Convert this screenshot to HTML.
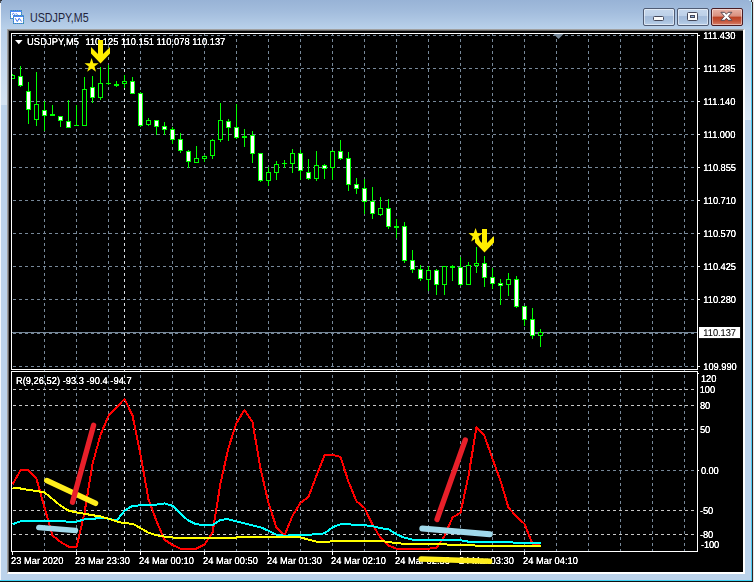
<!DOCTYPE html>
<html lang="en">
<head>
<meta charset="utf-8">
<title>USDJPY,M5</title>
<style>
html,body{margin:0;padding:0;}
body{width:754px;height:582px;overflow:hidden;position:relative;background:#bcd3eb;font-family:"Liberation Sans",sans-serif;}
#win{position:absolute;left:0;top:0;width:754px;height:582px;overflow:hidden;background:linear-gradient(to bottom,#98b3d6 0px,#a3bddd 12px,#b9d1ea 29px,#bcd3eb 40px);}
#bandL{position:absolute;left:1px;top:29px;width:6px;height:76px;background:linear-gradient(to bottom,#b8cfe8 0,#d4e3f2 100%);}
#bandR{position:absolute;left:745px;top:29px;width:6px;height:91px;background:linear-gradient(to bottom,#b8cfe8 0,#dae7f4 100%);}
#edgeL{position:absolute;left:0;top:0;width:1px;height:582px;background:#f4f8fc;}
#edgeR1{position:absolute;left:751px;top:0;width:1px;height:582px;background:linear-gradient(to bottom,#b4e6f8 0,#8cdcf6 20px,#4ccaf2 60px);}
#edgeR2{position:absolute;left:752px;top:0;width:1px;height:582px;background:#2c2424;}
#edgeR3{position:absolute;left:753px;top:0;width:1px;height:582px;background:#e8e8e8;}
#edgeB1{position:absolute;left:0;top:580px;width:752px;height:1px;background:#3fd2f4;}
#edgeB2{position:absolute;left:0;top:581px;width:753px;height:1px;background:#101010;}
#client{position:absolute;left:7px;top:29px;width:738px;height:545px;background:#000;box-sizing:border-box;border-left:1px solid #a0a0a0;border-top:1px solid #a0a0a0;border-right:2px solid #fff;border-bottom:2px solid #fff;}
#client:before{content:"";position:absolute;left:0;top:0;right:0;bottom:0;border-left:1px solid #666;border-top:1px solid #666;}
#title{position:absolute;left:29.5px;top:8.5px;height:18px;line-height:18px;font-size:12px;color:#14122e;opacity:.92;white-space:nowrap;transform-origin:0 50%;transform:scaleX(.892);}
.px{position:absolute;}
.btn{position:absolute;top:8px;height:18px;box-sizing:border-box;border:1px solid #505c74;border-radius:2px;box-shadow:inset 0 0 0 1px rgba(255,255,255,.5);background:linear-gradient(to bottom,#c6d7ec 0%,#bcd0e8 44%,#a3bbda 47%,#a9c1de 75%,#bbd1ea 100%);}
#bclose{border-color:#4a1c22;background:linear-gradient(to bottom,#e8b2a6 0%,#d98f7e 45%,#bb4023 50%,#c4553a 75%,#d8806a 100%);box-shadow:inset 0 0 0 1px rgba(255,255,255,.45);}
</style>
</head>
<body>
<div id="win">
<div id="bandL"></div><div id="bandR"></div><div id="edgeL"></div><div id="edgeR1"></div><div id="edgeR2"></div><div id="edgeR3"></div><div id="edgeB1"></div><div id="edgeB2"></div><div class="px" style="left:0;top:0;width:2px;height:1px;background:#30343c"></div><div class="px" style="left:0;top:1px;width:1px;height:2px;background:#50545c"></div><div class="px" style="left:751px;top:0;width:1px;height:2px;background:#283038"></div><div class="px" style="left:749px;top:0;width:2px;height:1px;background:#c8e8f8"></div><div class="px" style="left:752px;top:0;width:1px;height:2px;background:#e0e0e0"></div>
<svg width="16" height="16" viewBox="0 0 16 16" style="position:absolute;left:9px;top:9px">
<g shape-rendering="crispEdges">
<rect x="1" y="1" width="12" height="9" fill="#4a84fa"/>
<path d="M1.500 1.500H12.500V9.500H1.500Z" fill="none" stroke="#3f9c7c" stroke-opacity=".75" stroke-width="1" stroke-dasharray="1 1"/>
<rect x="2" y="3" width="10" height="6" fill="#fff"/>
</g>
<path d="M3 5.500L4.500 4.300L6 5.800M7 4.300L8.500 5.800" fill="none" stroke="#3a74f0" stroke-width="1"/>
<g shape-rendering="crispEdges">
<rect x="4" y="6" width="11" height="9" fill="#4a84fa"/>
<path d="M4.500 6.500H14.500V14.500H4.500Z" fill="none" stroke="#3f9c7c" stroke-opacity=".75" stroke-width="1" stroke-dasharray="1 1"/>
<rect x="5" y="8" width="9" height="6" fill="#fff"/>
</g>
<path d="M6.300 9.300L8.300 12.600L10.200 9.300L12.500 12.500" fill="none" stroke="#3a74f0" stroke-width="1"/>
</svg>
<div id="title">USDJPY,M5</div>
<div class="btn" id="bmin" style="left:643px;width:32px"><svg width="30" height="16" viewBox="0 0 30 16" style="position:absolute;left:0;top:0"><rect x="9.500" y="7.500" width="10" height="4" rx="1" fill="#fbfbfb" stroke="#45485a" stroke-width="1"/></svg></div>
<div class="btn" id="bmax" style="left:677px;width:32px"><svg width="30" height="16" viewBox="0 0 30 16" style="position:absolute;left:0;top:0"><rect x="9.500" y="3.500" width="10" height="8" rx="1" fill="#fbfbfb" stroke="#45485a" stroke-width="1"/><rect x="12.500" y="6.500" width="4" height="2" fill="#8fb0d8" stroke="#45485a" stroke-width="1"/></svg></div>
<div class="btn" id="bclose" style="left:711px;width:32px"><svg width="30" height="16" viewBox="0 0 30 16" style="position:absolute;left:0;top:0"><path transform="translate(-.6,-.2)" d="M9.500 3.500h3.800l1.700 2 1.700-2h3.800l-3.500 4 3.500 4h-3.800l-1.700-2-1.700 2h-3.800l3.500-4z" fill="#fff" stroke="#5c4a52" stroke-width="1" stroke-linejoin="round"/></svg></div>
<div id="client"></div>
<svg width="754" height="582" viewBox="0 0 754 582" style="position:absolute;left:0;top:0"><defs><clipPath id="cm"><rect x="12" y="34" width="685" height="335"/></clipPath><clipPath id="cs"><rect x="12" y="372" width="685" height="179"/></clipPath><filter id="tb" x="0" y="0" width="754" height="582" filterUnits="userSpaceOnUse" color-interpolation-filters="sRGB"><feComponentTransfer><feFuncA type="linear" slope="1.4" intercept="0"/></feComponentTransfer></filter></defs><g shape-rendering="crispEdges"><g stroke="#778899" stroke-width="1" stroke-dasharray="3 3" fill="none"><path d="M13 35.5H697"/><path d="M13 68.5H697"/><path d="M13 101.5H697"/><path d="M13 134.5H697"/><path d="M13 167.5H697"/><path d="M13 200.5H697"/><path d="M13 233.5H697"/><path d="M13 266.5H697"/><path d="M13 299.5H697"/><path d="M13 333.5H697"/><path d="M13 366.5H697"/><path d="M44.5 33V551"/><path d="M76.5 33V551"/><path d="M108.5 33V551"/><path d="M140.5 33V551"/><path d="M172.5 33V551"/><path d="M204.5 33V551"/><path d="M236.5 33V551"/><path d="M268.5 33V551"/><path d="M300.5 33V551"/><path d="M332.5 33V551"/><path d="M364.5 33V551"/><path d="M396.5 33V551"/><path d="M428.5 33V551"/><path d="M460.5 33V551"/><path d="M492.5 33V551"/><path d="M524.5 33V551"/><path d="M556.5 33V551"/><path d="M588.5 33V551"/><path d="M620.5 33V551"/><path d="M652.5 33V551"/><path d="M684.5 33V551"/><path d="M13 470.5H697"/></g><g stroke="#d8dde2" stroke-width="1" stroke-dasharray="3 3" fill="none"><path d="M124.5 33V551"/></g><g stroke="#c8c8c8" stroke-width="1" stroke-dasharray="3 3" fill="none"><path d="M13 389.5H697"/><path d="M13 405.5H697"/><path d="M13 429.5H697"/><path d="M13 510.5H697"/><path d="M13 534.5H697"/></g><path d="M12 332.5H697" stroke="#778899" stroke-width="1" fill="none"/><path d="M553.5 34H563.5L558.5 39Z" fill="#778899" shape-rendering="auto"/><g clip-path="url(#cm)"><rect x="12" y="74" width="1" height="5" fill="#00ff00"/><rect x="10" y="75" width="5" height="4" fill="#00ff00"/><rect x="11" y="76" width="3" height="2" fill="#000"/><rect x="20" y="66" width="1" height="21" fill="#00ff00"/><rect x="18" y="76" width="5" height="10" fill="#00ff00"/><rect x="19" y="77" width="3" height="8" fill="#fff"/><rect x="28" y="82" width="1" height="42" fill="#00ff00"/><rect x="26" y="91" width="5" height="19" fill="#00ff00"/><rect x="27" y="92" width="3" height="17" fill="#fff"/><rect x="36" y="72" width="1" height="54" fill="#00ff00"/><rect x="34" y="104" width="5" height="16" fill="#00ff00"/><rect x="35" y="105" width="3" height="14" fill="#000"/><rect x="44" y="101" width="1" height="30" fill="#00ff00"/><rect x="42" y="110" width="5" height="6" fill="#00ff00"/><rect x="43" y="111" width="3" height="4" fill="#fff"/><rect x="52" y="105" width="1" height="11" fill="#00ff00"/><rect x="50" y="114" width="5" height="2" fill="#00ff00"/><rect x="60" y="116" width="1" height="11" fill="#00ff00"/><rect x="58" y="116" width="5" height="5" fill="#00ff00"/><rect x="59" y="117" width="3" height="3" fill="#fff"/><rect x="68" y="100" width="1" height="28" fill="#00ff00"/><rect x="66" y="121" width="5" height="7" fill="#00ff00"/><rect x="67" y="122" width="3" height="5" fill="#fff"/><rect x="76" y="105" width="1" height="21" fill="#00ff00"/><rect x="74" y="125" width="5" height="1" fill="#00ff00"/><rect x="84" y="77" width="1" height="49" fill="#00ff00"/><rect x="82" y="89" width="5" height="37" fill="#00ff00"/><rect x="83" y="90" width="3" height="35" fill="#000"/><rect x="92" y="76" width="1" height="27" fill="#00ff00"/><rect x="90" y="87" width="5" height="11" fill="#00ff00"/><rect x="91" y="88" width="3" height="9" fill="#fff"/><rect x="100" y="67" width="1" height="33" fill="#00ff00"/><rect x="98" y="83" width="5" height="15" fill="#00ff00"/><rect x="99" y="84" width="3" height="13" fill="#000"/><rect x="108" y="65" width="1" height="20" fill="#00ff00"/><rect x="106" y="83" width="5" height="1" fill="#00ff00"/><rect x="116" y="81" width="1" height="6" fill="#00ff00"/><rect x="114" y="84" width="5" height="2" fill="#00ff00"/><rect x="124" y="75" width="1" height="13" fill="#00ff00"/><rect x="122" y="81" width="5" height="3" fill="#00ff00"/><rect x="123" y="82" width="3" height="1" fill="#000"/><rect x="132" y="77" width="1" height="17" fill="#00ff00"/><rect x="130" y="81" width="5" height="13" fill="#00ff00"/><rect x="131" y="82" width="3" height="11" fill="#fff"/><rect x="140" y="92" width="1" height="35" fill="#00ff00"/><rect x="138" y="93" width="5" height="33" fill="#00ff00"/><rect x="139" y="94" width="3" height="31" fill="#fff"/><rect x="148" y="118" width="1" height="8" fill="#00ff00"/><rect x="146" y="120" width="5" height="5" fill="#00ff00"/><rect x="147" y="121" width="3" height="3" fill="#000"/><rect x="156" y="120" width="1" height="15" fill="#00ff00"/><rect x="154" y="120" width="5" height="7" fill="#00ff00"/><rect x="155" y="121" width="3" height="5" fill="#fff"/><rect x="164" y="122" width="1" height="13" fill="#00ff00"/><rect x="162" y="126" width="5" height="4" fill="#00ff00"/><rect x="163" y="127" width="3" height="2" fill="#fff"/><rect x="172" y="127" width="1" height="17" fill="#00ff00"/><rect x="170" y="129" width="5" height="11" fill="#00ff00"/><rect x="171" y="130" width="3" height="9" fill="#fff"/><rect x="180" y="133" width="1" height="20" fill="#00ff00"/><rect x="178" y="139" width="5" height="12" fill="#00ff00"/><rect x="179" y="140" width="3" height="10" fill="#fff"/><rect x="188" y="150" width="1" height="18" fill="#00ff00"/><rect x="186" y="151" width="5" height="11" fill="#00ff00"/><rect x="187" y="152" width="3" height="9" fill="#fff"/><rect x="196" y="146" width="1" height="17" fill="#00ff00"/><rect x="194" y="158" width="5" height="5" fill="#00ff00"/><rect x="195" y="159" width="3" height="3" fill="#000"/><rect x="204" y="155" width="1" height="7" fill="#00ff00"/><rect x="202" y="156" width="5" height="3" fill="#00ff00"/><rect x="203" y="157" width="3" height="1" fill="#000"/><rect x="212" y="139" width="1" height="20" fill="#00ff00"/><rect x="210" y="140" width="5" height="16" fill="#00ff00"/><rect x="211" y="141" width="3" height="14" fill="#000"/><rect x="220" y="103" width="1" height="39" fill="#00ff00"/><rect x="218" y="120" width="5" height="20" fill="#00ff00"/><rect x="219" y="121" width="3" height="18" fill="#000"/><rect x="228" y="119" width="1" height="22" fill="#00ff00"/><rect x="226" y="121" width="5" height="7" fill="#00ff00"/><rect x="227" y="122" width="3" height="5" fill="#fff"/><rect x="236" y="104" width="1" height="35" fill="#00ff00"/><rect x="234" y="127" width="5" height="11" fill="#00ff00"/><rect x="235" y="128" width="3" height="9" fill="#fff"/><rect x="244" y="129" width="1" height="18" fill="#00ff00"/><rect x="242" y="136" width="5" height="2" fill="#00ff00"/><rect x="252" y="131" width="1" height="32" fill="#00ff00"/><rect x="250" y="135" width="5" height="19" fill="#00ff00"/><rect x="251" y="136" width="3" height="17" fill="#fff"/><rect x="260" y="153" width="1" height="29" fill="#00ff00"/><rect x="258" y="153" width="5" height="28" fill="#00ff00"/><rect x="259" y="154" width="3" height="26" fill="#fff"/><rect x="268" y="167" width="1" height="19" fill="#00ff00"/><rect x="266" y="172" width="5" height="9" fill="#00ff00"/><rect x="267" y="173" width="3" height="7" fill="#000"/><rect x="276" y="161" width="1" height="19" fill="#00ff00"/><rect x="274" y="164" width="5" height="9" fill="#00ff00"/><rect x="275" y="165" width="3" height="7" fill="#000"/><rect x="284" y="160" width="1" height="8" fill="#00ff00"/><rect x="282" y="163" width="5" height="1" fill="#00ff00"/><rect x="292" y="149" width="1" height="24" fill="#00ff00"/><rect x="290" y="153" width="5" height="11" fill="#00ff00"/><rect x="291" y="154" width="3" height="9" fill="#000"/><rect x="300" y="150" width="1" height="30" fill="#00ff00"/><rect x="298" y="153" width="5" height="18" fill="#00ff00"/><rect x="299" y="154" width="3" height="16" fill="#fff"/><rect x="308" y="159" width="1" height="21" fill="#00ff00"/><rect x="306" y="172" width="5" height="7" fill="#00ff00"/><rect x="307" y="173" width="3" height="5" fill="#fff"/><rect x="316" y="151" width="1" height="30" fill="#00ff00"/><rect x="314" y="165" width="5" height="14" fill="#00ff00"/><rect x="315" y="166" width="3" height="12" fill="#000"/><rect x="324" y="164" width="1" height="15" fill="#00ff00"/><rect x="322" y="165" width="5" height="4" fill="#00ff00"/><rect x="323" y="166" width="3" height="2" fill="#fff"/><rect x="332" y="150" width="1" height="30" fill="#00ff00"/><rect x="330" y="151" width="5" height="17" fill="#00ff00"/><rect x="331" y="152" width="3" height="15" fill="#000"/><rect x="340" y="140" width="1" height="20" fill="#00ff00"/><rect x="338" y="151" width="5" height="8" fill="#00ff00"/><rect x="339" y="152" width="3" height="6" fill="#fff"/><rect x="348" y="152" width="1" height="39" fill="#00ff00"/><rect x="346" y="158" width="5" height="27" fill="#00ff00"/><rect x="347" y="159" width="3" height="25" fill="#fff"/><rect x="356" y="178" width="1" height="16" fill="#00ff00"/><rect x="354" y="184" width="5" height="5" fill="#00ff00"/><rect x="355" y="185" width="3" height="3" fill="#fff"/><rect x="364" y="179" width="1" height="35" fill="#00ff00"/><rect x="362" y="188" width="5" height="14" fill="#00ff00"/><rect x="363" y="189" width="3" height="12" fill="#fff"/><rect x="372" y="187" width="1" height="32" fill="#00ff00"/><rect x="370" y="201" width="5" height="13" fill="#00ff00"/><rect x="371" y="202" width="3" height="11" fill="#fff"/><rect x="380" y="197" width="1" height="19" fill="#00ff00"/><rect x="378" y="208" width="5" height="7" fill="#00ff00"/><rect x="379" y="209" width="3" height="5" fill="#000"/><rect x="388" y="199" width="1" height="30" fill="#00ff00"/><rect x="386" y="208" width="5" height="19" fill="#00ff00"/><rect x="387" y="209" width="3" height="17" fill="#fff"/><rect x="396" y="219" width="1" height="19" fill="#00ff00"/><rect x="394" y="226" width="5" height="2" fill="#00ff00"/><rect x="404" y="222" width="1" height="41" fill="#00ff00"/><rect x="402" y="226" width="5" height="35" fill="#00ff00"/><rect x="403" y="227" width="3" height="33" fill="#fff"/><rect x="412" y="250" width="1" height="23" fill="#00ff00"/><rect x="410" y="260" width="5" height="10" fill="#00ff00"/><rect x="411" y="261" width="3" height="8" fill="#fff"/><rect x="420" y="265" width="1" height="16" fill="#00ff00"/><rect x="418" y="269" width="5" height="10" fill="#00ff00"/><rect x="419" y="270" width="3" height="8" fill="#fff"/><rect x="428" y="266" width="1" height="25" fill="#00ff00"/><rect x="426" y="270" width="5" height="10" fill="#00ff00"/><rect x="427" y="271" width="3" height="8" fill="#000"/><rect x="436" y="269" width="1" height="26" fill="#00ff00"/><rect x="434" y="270" width="5" height="15" fill="#00ff00"/><rect x="435" y="271" width="3" height="13" fill="#fff"/><rect x="444" y="266" width="1" height="29" fill="#00ff00"/><rect x="442" y="266" width="5" height="19" fill="#00ff00"/><rect x="443" y="267" width="3" height="17" fill="#000"/><rect x="452" y="265" width="1" height="16" fill="#00ff00"/><rect x="450" y="266" width="5" height="2" fill="#00ff00"/><rect x="460" y="257" width="1" height="29" fill="#00ff00"/><rect x="458" y="267" width="5" height="18" fill="#00ff00"/><rect x="459" y="268" width="3" height="16" fill="#fff"/><rect x="468" y="262" width="1" height="23" fill="#00ff00"/><rect x="466" y="265" width="5" height="20" fill="#00ff00"/><rect x="467" y="266" width="3" height="18" fill="#000"/><rect x="476" y="247" width="1" height="26" fill="#00ff00"/><rect x="474" y="263" width="5" height="3" fill="#00ff00"/><rect x="475" y="264" width="3" height="1" fill="#000"/><rect x="484" y="256" width="1" height="31" fill="#00ff00"/><rect x="482" y="263" width="5" height="15" fill="#00ff00"/><rect x="483" y="264" width="3" height="13" fill="#fff"/><rect x="492" y="268" width="1" height="21" fill="#00ff00"/><rect x="490" y="277" width="5" height="7" fill="#00ff00"/><rect x="491" y="278" width="3" height="5" fill="#fff"/><rect x="500" y="279" width="1" height="26" fill="#00ff00"/><rect x="498" y="283" width="5" height="3" fill="#00ff00"/><rect x="499" y="284" width="3" height="1" fill="#fff"/><rect x="508" y="273" width="1" height="23" fill="#00ff00"/><rect x="506" y="279" width="5" height="6" fill="#00ff00"/><rect x="507" y="280" width="3" height="4" fill="#000"/><rect x="516" y="276" width="1" height="32" fill="#00ff00"/><rect x="514" y="279" width="5" height="28" fill="#00ff00"/><rect x="515" y="280" width="3" height="26" fill="#fff"/><rect x="524" y="306" width="1" height="20" fill="#00ff00"/><rect x="522" y="306" width="5" height="14" fill="#00ff00"/><rect x="523" y="307" width="3" height="12" fill="#fff"/><rect x="532" y="308" width="1" height="31" fill="#00ff00"/><rect x="530" y="319" width="5" height="17" fill="#00ff00"/><rect x="531" y="320" width="3" height="15" fill="#fff"/><rect x="540" y="329" width="1" height="18" fill="#00ff00"/><rect x="538" y="332" width="5" height="4" fill="#00ff00"/><rect x="539" y="333" width="3" height="2" fill="#000"/></g><g fill="none" stroke="#fff" stroke-width="1"><path d="M11.5 369.5V33.5H697.5V369.5H11.5"/><path d="M11.5 551.5V371.5H697.5V551.5H11.5"/></g><g fill="#fff"><rect x="698" y="35" width="2" height="1"/><rect x="698" y="68" width="2" height="1"/><rect x="698" y="101" width="2" height="1"/><rect x="698" y="134" width="2" height="1"/><rect x="698" y="167" width="2" height="1"/><rect x="698" y="200" width="2" height="1"/><rect x="698" y="233" width="2" height="1"/><rect x="698" y="266" width="2" height="1"/><rect x="698" y="299" width="2" height="1"/><rect x="698" y="366" width="2" height="1"/><rect x="698" y="373" width="1" height="1"/><rect x="698" y="470" width="1" height="1"/><rect x="12" y="552" width="1" height="3"/><rect x="76" y="552" width="1" height="3"/><rect x="140" y="552" width="1" height="3"/><rect x="204" y="552" width="1" height="3"/><rect x="268" y="552" width="1" height="3"/><rect x="332" y="552" width="1" height="3"/><rect x="396" y="552" width="1" height="3"/><rect x="460" y="552" width="1" height="3"/><rect x="524" y="552" width="1" height="3"/></g></g><g font-family="Liberation Sans, sans-serif" font-size="9.33" text-rendering="geometricPrecision" fill="#fff" stroke="#fff" stroke-width=".05" style="white-space:pre" filter="url(#tb)"><text transform="translate(703.3,39) scale(1,1.06)" letter-spacing="-0.05" xml:space="preserve">111.430</text><text transform="translate(703.3,72) scale(1,1.06)" letter-spacing="-0.05" xml:space="preserve">111.285</text><text transform="translate(703.3,105) scale(1,1.06)" letter-spacing="-0.05" xml:space="preserve">111.140</text><text transform="translate(703.3,138) scale(1,1.06)" letter-spacing="-0.05" xml:space="preserve">111.000</text><text transform="translate(703.3,171) scale(1,1.06)" letter-spacing="-0.05" xml:space="preserve">110.855</text><text transform="translate(703.3,204) scale(1,1.06)" letter-spacing="-0.05" xml:space="preserve">110.710</text><text transform="translate(703.3,237) scale(1,1.06)" letter-spacing="-0.05" xml:space="preserve">110.570</text><text transform="translate(703.3,270) scale(1,1.06)" letter-spacing="-0.05" xml:space="preserve">110.425</text><text transform="translate(703.3,303) scale(1,1.06)" letter-spacing="-0.05" xml:space="preserve">110.280</text><text transform="translate(703.3,370) scale(1,1.06)" letter-spacing="-0.05" xml:space="preserve">109.990</text><rect x="699" y="327" width="41" height="11" fill="#fff" shape-rendering="crispEdges"/><text transform="translate(703.3,336) scale(1,1.06)" fill="#000" stroke="#000" letter-spacing="-.05">110.137</text><text transform="translate(701,382) scale(1,1.06)" letter-spacing="-0.12" xml:space="preserve">120</text><text transform="translate(699.8,393) scale(1,1.06)" letter-spacing="-0.12" xml:space="preserve">100</text><text transform="translate(700,409) scale(1,1.06)" letter-spacing="-0.12" xml:space="preserve">80</text><text transform="translate(700,433) scale(1,1.06)" letter-spacing="-0.12" xml:space="preserve">50</text><text transform="translate(701,474) scale(1,1.06)" letter-spacing="-0.12" xml:space="preserve">0.00</text><text transform="translate(700,514) scale(1,1.06)" letter-spacing="-0.12" xml:space="preserve">-50</text><text transform="translate(700,538) scale(1,1.06)" letter-spacing="-0.12" xml:space="preserve">-80</text><text transform="translate(701,548) scale(1,1.06)" letter-spacing="-0.12" xml:space="preserve">-100</text><text transform="translate(11,564) scale(1,1.06)" xml:space="preserve">23 Mar 2020</text><text transform="translate(75,564) scale(1,1.06)" xml:space="preserve">23 Mar 23:30</text><text transform="translate(139,564) scale(1,1.06)" xml:space="preserve">24 Mar 00:10</text><text transform="translate(203,564) scale(1,1.06)" xml:space="preserve">24 Mar 00:50</text><text transform="translate(267,564) scale(1,1.06)" xml:space="preserve">24 Mar 01:30</text><text transform="translate(331,564) scale(1,1.06)" xml:space="preserve">24 Mar 02:10</text><text transform="translate(395,564) scale(1,1.06)" xml:space="preserve">24 Mar 02:50</text><text transform="translate(459,564) scale(1,1.06)" xml:space="preserve">24 Mar 03:30</text><text transform="translate(523,564) scale(1,1.06)" xml:space="preserve">24 Mar 04:10</text><text transform="translate(0,45) scale(1,1.06)" xml:space="preserve"><tspan x="27" letter-spacing=".1">USDJPY,M5</tspan><tspan x="82.8"> 110.125 110.151 110.078 110.137</tspan></text><text transform="translate(16,384) scale(1,1.06)" xml:space="preserve">R(9,26,52) -93.3 -90.4 -94.7</text></g><g clip-path="url(#cs)"><polyline points="12.5,484.5 20.5,470.5 28.5,470.2 36.5,478.8 44.5,507.5 52.5,535.5 60.5,542.0 68.5,546.6 76.5,547.2 84.5,512.8 92.5,464.0 100.5,434.8 108.5,415.9 116.5,407.3 124.5,399.0 132.5,415.5 140.5,454.7 148.5,499.5 156.5,521.0 164.5,539.7 172.5,545.0 180.5,548.6 188.5,549.0 196.5,548.6 204.5,544.6 212.5,532.7 220.5,483.2 228.5,447.8 236.5,422.9 244.5,409.9 252.5,421.9 260.5,468.5 268.5,503.0 276.5,527.7 284.5,535.7 292.5,515.8 300.5,502.8 308.5,496.8 316.5,475.4 324.5,455.5 332.5,454.8 340.5,456.9 348.5,481.8 356.5,501.2 364.5,508.0 372.5,524.7 380.5,537.7 388.5,545.6 396.5,548.6 404.5,549.0 412.5,549.0 420.5,549.0 428.5,548.6 436.5,548.0 444.5,536.0 452.5,517.5 460.5,512.7 468.5,475.8 476.5,427.3 484.5,435.9 492.5,458.8 500.5,480.8 508.5,507.7 516.5,516.5 524.5,524.0 532.5,543.8 540.5,544.0" fill="none" stroke="#ff0000" stroke-width="2" stroke-linejoin="round" shape-rendering="crispEdges"/><polyline points="12.5,524.3 20.5,521.3 28.5,520.9 36.5,521.0 44.5,521.0 52.5,521.0 60.5,521.0 68.5,521.7 76.5,521.7 84.5,519.3 92.5,519.0 100.5,517.7 108.5,518.7 116.5,520.7 124.5,510.8 132.5,505.8 140.5,505.4 148.5,504.8 156.5,504.6 164.5,503.4 172.5,505.8 180.5,513.8 188.5,520.7 196.5,524.3 204.5,525.1 212.5,525.1 220.5,519.7 228.5,519.3 236.5,521.3 244.5,523.3 252.5,525.3 260.5,527.3 268.5,530.7 276.5,534.7 284.5,535.7 292.5,535.3 300.5,534.7 308.5,534.7 316.5,534.3 324.5,533.3 332.5,527.3 340.5,524.3 348.5,524.3 356.5,525.1 364.5,525.3 372.5,526.1 380.5,528.1 388.5,529.3 396.5,534.3 404.5,537.7 412.5,539.7 420.5,539.7 428.5,539.7 436.5,539.7 444.5,539.7 452.5,539.7 460.5,540.3 468.5,541.7 476.5,542.0 484.5,542.0 492.5,542.0 500.5,542.0 508.5,542.0 516.5,542.9 524.5,543.0 532.5,543.0 540.5,543.0" fill="none" stroke="#00ffff" stroke-width="2" stroke-linejoin="round" shape-rendering="crispEdges"/><polyline points="12.5,487.9 20.5,488.5 28.5,489.9 36.5,490.9 44.5,492.5 52.5,499.0 60.5,505.7 68.5,510.6 76.5,512.4 84.5,513.8 92.5,515.2 100.5,516.4 108.5,518.7 116.5,521.3 124.5,523.3 132.5,523.7 140.5,528.1 148.5,532.7 156.5,535.2 164.5,536.6 172.5,537.5 180.5,537.5 188.5,537.5 196.5,537.5 204.5,537.5 212.5,537.5 220.5,537.5 228.5,537.5 236.5,537.5 244.5,537.0 252.5,537.0 260.5,537.0 268.5,537.0 276.5,537.0 284.5,537.0 292.5,537.0 300.5,537.3 308.5,539.7 316.5,541.7 324.5,542.0 332.5,541.3 340.5,540.9 348.5,540.9 356.5,540.9 364.5,540.9 372.5,540.9 380.5,540.9 388.5,542.0 396.5,543.2 404.5,543.8 412.5,543.8 420.5,543.8 428.5,543.8 436.5,543.8 444.5,544.4 452.5,544.8 460.5,545.0 468.5,545.2 476.5,545.6 484.5,546.0 492.5,546.0 500.5,546.0 508.5,546.0 516.5,546.0 524.5,546.0 532.5,546.0 540.5,546.0" fill="none" stroke="#ffff00" stroke-width="2" stroke-linejoin="round" shape-rendering="crispEdges"/></g><g fill="none" stroke-linecap="round"><path d="M46.8 480.5L95.5 503.3" stroke="#ffee1c" stroke-width="5.5"/><path d="M72.5 502.3L93.6 425.3" stroke="#e8202a" stroke-width="5.3"/><path d="M38.8 527.5L75.5 530.6" stroke="#a0d8ea" stroke-width="5.5"/><path d="M437 519.5L465.3 440" stroke="#e8202a" stroke-width="5.3"/><path d="M422.3 528.6L489.8 534.3" stroke="#a0d8ea" stroke-width="6"/><path d="M421.2 559L489.6 561.3" stroke="#ffee1c" stroke-width="5.5"/></g><path d="M98.0 40H103.0V54L110.0 47V53.5L100.5 63.5L91.0 53.5V47L98.0 54Z" fill="#ffee00"/><polygon points="91.60,58.10 93.36,63.17 98.73,63.28 94.45,66.53 96.01,71.67 91.60,68.60 87.19,71.67 88.75,66.53 84.47,63.28 89.84,63.17" fill="#ffee00"/><path d="M482.0 229H487.0V243L494.0 236V242.5L484.5 252.5L475.0 242.5V236L482.0 243Z" fill="#ffee00"/><polygon points="475.60,228.00 477.36,233.07 482.73,233.18 478.45,236.43 480.01,241.57 475.60,238.50 471.19,241.57 472.75,236.43 468.47,233.18 473.84,233.07" fill="#ffee00"/><path d="M15 40H22.6L18.8 44.2Z" fill="#fff"/></svg>

</div>
</body>
</html>
